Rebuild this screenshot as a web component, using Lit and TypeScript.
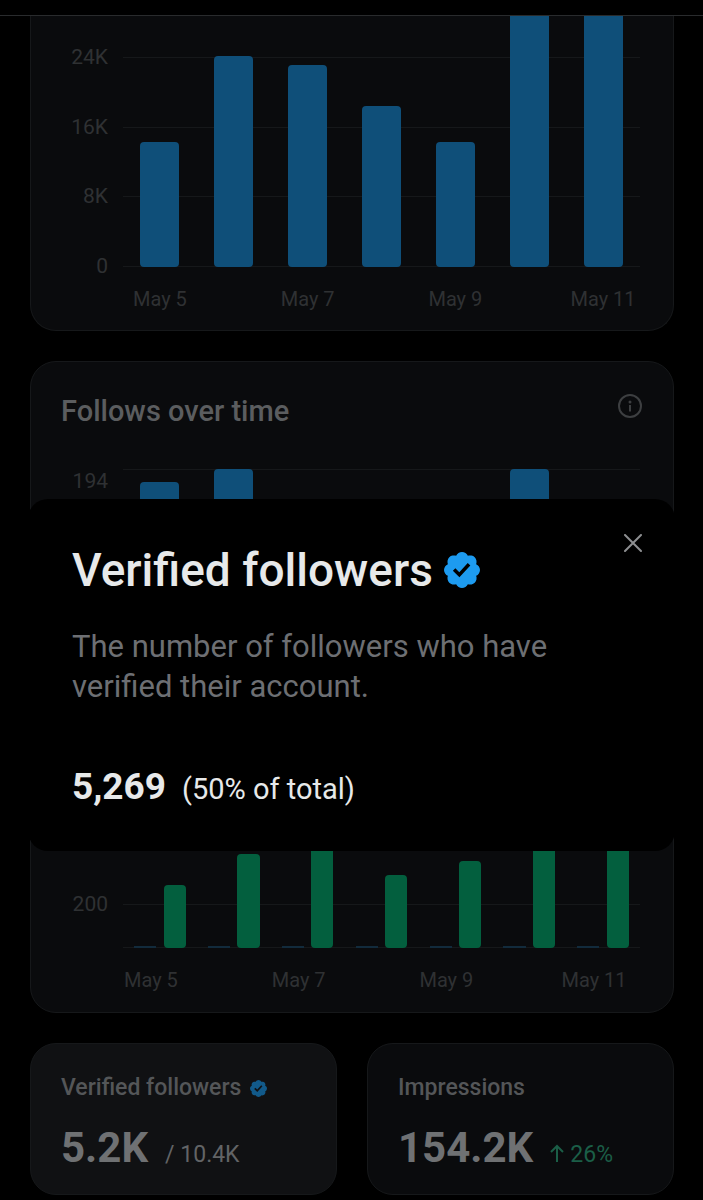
import { LitElement, html, css, svg } from "lit";
import { customElement, property } from "lit/decorators.js";

interface Series {
  tone: "blue" | "navy" | "green";
  values: number[];
}

const DAYS = ["May 5", "", "May 7", "", "May 9", "", "May 11"];

const badgePath = svg`<path fill="currentColor" d="M20.396 11c-.018-.646-.215-1.275-.57-1.816-.354-.54-.852-.972-1.438-1.246.223-.607.27-1.264.14-1.897-.131-.634-.437-1.218-.882-1.687-.47-.445-1.053-.75-1.687-.882-.633-.13-1.29-.083-1.897.14-.273-.587-.704-1.086-1.245-1.44S11.647 1.62 11 1.604c-.646.017-1.273.213-1.813.568s-.969.854-1.24 1.44c-.608-.223-1.267-.272-1.902-.14-.635.13-1.22.436-1.69.882-.445.47-.749 1.055-.878 1.688-.13.633-.08 1.29.144 1.896-.587.274-1.087.705-1.443 1.245-.356.54-.555 1.17-.574 1.817.02.647.218 1.276.574 1.817.356.54.856.972 1.443 1.245-.224.606-.274 1.263-.144 1.896.13.634.433 1.218.877 1.688.47.443 1.054.747 1.687.878.633.132 1.29.084 1.897-.136.274.586.705 1.084 1.246 1.439.54.354 1.17.551 1.816.569.647-.016 1.276-.213 1.817-.567s.972-.854 1.245-1.44c.604.239 1.266.296 1.903.164.636-.132 1.22-.447 1.68-.907.46-.46.776-1.044.908-1.681s.075-1.299-.165-1.903c.586-.274 1.084-.705 1.439-1.246.354-.54.551-1.17.569-1.816zM9.662 14.85l-3.429-3.428 1.293-1.302 2.072 2.072 4.4-4.794 1.347 1.246z"/>`;

@customElement("verified-badge")
class VerifiedBadge extends LitElement {
  static styles = css`
    :host { display: block; flex: none; }
    .icon { display: block; width: 100%; height: 100%; }
  `;
  render() {
    return html`<svg class="icon" viewBox="1.6 1.6 18.8 18.8" role="img" aria-label="Verified">${badgePath}</svg>`;
  }
}

@customElement("bar-chart")
class BarChart extends LitElement {
  @property({ attribute: false }) ticks: string[] = [];
  @property({ attribute: false }) days: string[] = DAYS;
  @property({ attribute: false }) series: Series[] = [];
  @property({ type: Number }) max = 100;
  @property({ reflect: true }) kind = "wide";

  static styles = css`
    :host { display: block; padding: 0 33px 19px 30px; }
    .chart {
      display: grid;
      grid-template-columns: 47px 1fr;
      column-gap: 15px;
      color: #2f3133;
      font-size: 20px;
      line-height: 24px;
    }
    .axis, .lines { display: flex; flex-direction: column; justify-content: space-between; align-self: end; }
    .axis { text-align: right; margin-bottom: -11px; height: 233px; font-size: 21px; }
    .tick { height: 24px; }
    .plot { display: grid; height: 251px; }
    .lines, .bars { grid-area: 1 / 1; }
    .lines { height: 210px; }
    .line { height: 1px; background: #16181a; }
    .bars { display: grid; grid-template-columns: repeat(7, 1fr); }
    .day { display: flex; justify-content: center; align-items: flex-end; gap: 10%; min-height: 0; }
    .bar { width: 53%; border-radius: 4px; }
    .blue { background: #0f4f79; }
    .navy { background: #122b3c; border-radius: 0; }
    .green { background: #035f3e; }
    .labels {
      grid-column: 2;
      display: grid;
      grid-template-columns: repeat(7, 1fr);
      margin-top: 20px;
      height: 24px;
    }
    .label { display: flex; justify-content: center; white-space: nowrap; }
    :host([kind="short"]) .plot { height: 130px; }
    :host([kind="short"]) .lines { height: 130px; }
    :host([kind="short"]) .axis { height: 141px; }
    :host([kind="paired"]) { padding-bottom: 20px; }
    :host([kind="paired"]) .plot { height: 147px; }
    :host([kind="paired"]) .lines { height: 44px; }
    :host([kind="paired"]) .axis { height: 67px; }
    :host([kind="paired"]) .bar { width: 30%; }
    :host([kind="paired"]) .labels { margin-left: -9px; margin-right: 9px; }
    :host([kind="wide"]) .bar.full { border-top-left-radius: 0; border-top-right-radius: 0; }
  `;

  render() {
    return html`
      <div class="chart">
        <div class="axis">${this.ticks.map((t) => html`<span class="tick">${t}</span>`)}</div>
        <div class="plot">
          <div class="lines">${this.ticks.map(() => html`<div class="line"></div>`)}</div>
          <div class="bars">
            ${DAYS.map(
              (_, i) => html`<div class="day">
                ${this.series.map((s) => {
                  const share = Math.min(100, (s.values[i] / this.max) * 100);
                  return html`<div class="bar ${s.tone} ${share === 100 ? "full" : ""}" style="height:${share}%"></div>`;
                })}
              </div>`
            )}
          </div>
        </div>
        <div class="labels">${this.days.map((d) => html`<span class="label">${d}</span>`)}</div>
      </div>
    `;
  }
}

@customElement("verified-dialog")
class VerifiedDialog extends LitElement {
  static styles = css`
    :host {
      display: block;
      box-sizing: border-box;
      padding: 28px 26px 42px 44px;
      border-radius: 20px;
      background: #000;
      color: #e7e9ea;
    }
    .head { display: flex; justify-content: space-between; align-items: flex-start; }
    .title {
      display: flex;
      align-items: center;
      gap: 11px;
      margin: 15px 0 0;
      font-size: 46px;
      line-height: 56px;
      font-weight: 500;
    }
    .badge { width: 36px; height: 36px; color: #1d9bf0; }
    .close {
      display: grid;
      place-items: center;
      width: 32px;
      height: 32px;
      padding: 0;
      border: 0;
      background: none;
      color: #8d8f91;
    }
    .cross { width: 18px; height: 18px; }
    .text { margin: 29px 0 0; max-width: 520px; font-size: 31px; line-height: 40px; color: #6d6f73; }
    .figures {
      display: flex;
      align-items: baseline;
      gap: 16px;
      margin: 58px 0 0;
      font-size: 29px;
      line-height: 40px;
    }
    .count { font-size: 37px; line-height: 44px; font-weight: 700; }
  `;
  render() {
    return html`
      <div class="head">
        <h2 class="title">Verified followers<verified-badge class="badge"></verified-badge></h2>
        <button class="close" type="button" aria-label="Close">
          <svg class="cross" viewBox="0 0 18 18" fill="none" stroke="currentColor" stroke-width="2" stroke-linecap="round">
            <path d="M1 1l16 16M17 1L1 17" />
          </svg>
        </button>
      </div>
      <p class="text">The number of followers who have verified their account.</p>
      <p class="figures"><strong class="count">5,269</strong><span>(50% of total)</span></p>
    `;
  }
}

@customElement("app-root")
class AppRoot extends LitElement {
  static styles = css`
    :host {
      display: block;
      position: relative;
      height: 100vh;
      overflow: hidden;
      background: #000;
      font-family: Roboto, "Liberation Sans", sans-serif;
    }
    .topbar { height: 15px; border-bottom: 1px solid #292b2d; }
    .feed { padding: 0 29px 5px 30px; }
    .card, .stat { border: 1px solid #16181a; border-radius: 26px; background: #0a0b0d; }
    .card + .card { margin-top: 30px; }
    .first { border-top: 0; border-top-left-radius: 0; border-top-right-radius: 0; }
    .head {
      display: flex;
      justify-content: space-between;
      align-items: flex-start;
      height: 36px;
      padding: 31px 31px 40px 30px;
    }
    .title { margin: 0; font-size: 29px; line-height: 36px; font-weight: 500; color: #5b5d5f; }
    .info { padding: 1px 0; border: 0; background: none; color: #3d3f41; }
    .info-icon { display: block; width: 24px; height: 24px; }
    .stats { display: grid; grid-template-columns: 1fr 1fr; gap: 30px; margin-top: 30px; }
    .stat { padding: 30px 30px 22px; }
    .active { background: #101113; }
    .name {
      display: flex;
      align-items: center;
      gap: 9px;
      margin: 0;
      font-size: 23px;
      line-height: 28px;
      font-weight: 500;
      color: #545658;
    }
    .badge { width: 17px; height: 17px; color: #125a8a; }
    .value {
      display: flex;
      align-items: baseline;
      gap: 17px;
      margin: 22px 0 0;
      font-size: 23px;
      line-height: 28px;
      color: #626466;
    }
    .big { font-size: 42px; line-height: 48px; font-weight: 700; color: #6f7173; }
    .up { display: flex; align-items: baseline; gap: 6px; color: #1b5e47; }
    .arrow { width: 14px; height: 18px; }
    .overlay { position: absolute; inset: 499px 28px auto; }
  `;

  render() {
    return html`
      <header class="topbar"></header>
      <main class="feed">
        <section class="card first">
          <bar-chart
            kind="wide"
            .ticks=${["24K", "16K", "8K", "0"]}
            .max=${28800}
            .series=${[{ tone: "blue", values: [14340, 24200, 23180, 18470, 14340, 31000, 33000] }]}
          ></bar-chart>
        </section>
        <section class="card">
          <div class="head">
            <h2 class="title">Follows over time</h2>
            <button class="info" type="button" aria-label="About follows over time">
              <svg class="info-icon" viewBox="0 0 24 24" fill="none" stroke="currentColor" stroke-width="2">
                <circle cx="12" cy="12" r="11" />
                <path d="M12 11v6.5" />
                <circle cx="12" cy="8" r="1.5" fill="currentColor" stroke="none" />
              </svg>
            </button>
          </div>
          <bar-chart
            kind="short"
            .ticks=${["194", ""]}
            .days=${[]}
            .max=${194}
            .series=${[{ tone: "blue", values: [174, 194, 120, 96, 88, 194, 130] }]}
          ></bar-chart>
        </section>
        <section class="card">
          <div class="head"></div>
          <bar-chart
            kind="paired"
            .ticks=${["200", ""]}
            .max=${690}
            .series=${[
              { tone: "navy", values: [8, 8, 8, 8, 8, 8, 8] },
              { tone: "green", values: [298, 441, 520, 343, 408, 560, 600] },
            ]}
          ></bar-chart>
        </section>
        <div class="stats">
          <section class="stat active">
            <h3 class="name">Verified followers<verified-badge class="badge"></verified-badge></h3>
            <p class="value"><strong class="big">5.2K</strong><span>/ 10.4K</span></p>
          </section>
          <section class="stat">
            <h3 class="name">Impressions</h3>
            <p class="value">
              <strong class="big">154.2K</strong>
              <span class="up">
                <svg class="arrow" viewBox="0 0 14 18" fill="none" stroke="currentColor" stroke-width="2">
                  <path d="M7 18V2M1 8l6-6 6 6" />
                </svg>
                26%
              </span>
            </p>
          </section>
        </div>
      </main>
      <verified-dialog class="overlay" role="dialog" aria-label="Verified followers"></verified-dialog>
    `;
  }
}
